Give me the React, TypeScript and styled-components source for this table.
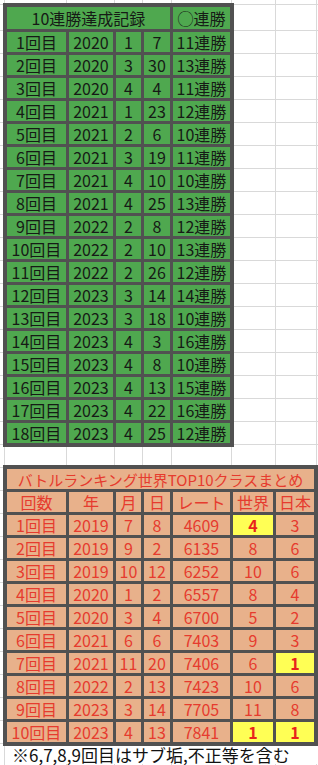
import React from "react";
import styled, { createGlobalStyle } from "styled-components";

const GlobalStyle = createGlobalStyle`
  html, body {
    margin: 0;
    padding: 0;
    background: #ffffff;
    overflow: hidden;
  }
  body {
    font-family: "Noto Sans CJK JP", "Noto Sans", sans-serif;
  }
`;

const GRID = "#d9d9d9";

// 背景のセル罫線（スプレッドシート風）
const Sheet = styled.div`
  width: 318px;
  height: 765px;
  box-sizing: border-box;
  padding: 3px 0 0 3px;
  display: flex;
  flex-direction: column;
  background-color: #ffffff;
  background-image:
    linear-gradient(
      to right,
      transparent 4px, ${GRID} 4px 5px,
      transparent 5px 66px, ${GRID} 66px 67px,
      transparent 67px 114px, ${GRID} 114px 115px,
      transparent 115px 142px, ${GRID} 142px 143px,
      transparent 143px 171px, ${GRID} 171px 172px,
      transparent 172px 231px, ${GRID} 231px 232px,
      transparent 232px 275px, ${GRID} 275px 276px,
      transparent 276px 316px, ${GRID} 316px 317px,
      transparent 317px
    ),
    linear-gradient(to bottom, transparent 4px, ${GRID} 4px 5px, transparent 5px),
    repeating-linear-gradient(to bottom, ${GRID} 0 1px, transparent 1px 23px);
  background-repeat: no-repeat;
  background-size: 100% 100%, 100% 100%, 100% 2000px;
  background-position: 0 0, 0 0, 0 30px;
`;

const Table = styled.div<{ $cols: string; $rows: string }>`
  display: grid;
  grid-template-columns: ${(p) => p.$cols};
  grid-template-rows: ${(p) => p.$rows};
  gap: 3px;
  padding: 4px;
  background: #515151;
  width: max-content;
`;

const Cell = styled.div<{ $tone: "green" | "peach" | "yellow"; $span?: number; $small?: boolean }>`
  display: flex;
  align-items: center;
  justify-content: center;
  grid-column: ${(p) => (p.$span ? `span ${p.$span}` : "auto")};
  background: ${(p) =>
    p.$tone === "green" ? "#4fa84f" : p.$tone === "peach" ? "#e8b18b" : "#ffff55"};
  color: ${(p) => (p.$tone === "green" ? "#161a16" : p.$tone === "yellow" ? "#e8231c" : "#e63b2e")};
  font-weight: ${(p) => (p.$tone === "yellow" ? 700 : 400)};
  font-size: ${(p) => (p.$small ? "15px" : "16px")};
  line-height: 1;
  white-space: nowrap;
`;

const Gap = styled.div`
  height: 18px;
  flex: none;
`;

const Footnote = styled.div`
  margin-left: 3px;
  height: 18px;
  width: 311px;
  background: #ffffff;
  color: #111111;
  font-size: 17px;
  line-height: 18px;
  padding-left: 6px;
  white-space: nowrap;
`;

const streaks: [string, string, string, string, string][] = [
  ["1回目", "2020", "1", "7", "11連勝"],
  ["2回目", "2020", "3", "30", "13連勝"],
  ["3回目", "2020", "4", "4", "11連勝"],
  ["4回目", "2021", "1", "23", "12連勝"],
  ["5回目", "2021", "2", "6", "10連勝"],
  ["6回目", "2021", "3", "19", "11連勝"],
  ["7回目", "2021", "4", "10", "10連勝"],
  ["8回目", "2021", "4", "25", "13連勝"],
  ["9回目", "2022", "2", "8", "12連勝"],
  ["10回目", "2022", "2", "10", "13連勝"],
  ["11回目", "2022", "2", "26", "12連勝"],
  ["12回目", "2023", "3", "14", "14連勝"],
  ["13回目", "2023", "3", "18", "10連勝"],
  ["14回目", "2023", "4", "3", "16連勝"],
  ["15回目", "2023", "4", "8", "10連勝"],
  ["16回目", "2023", "4", "13", "15連勝"],
  ["17回目", "2023", "4", "22", "16連勝"],
  ["18回目", "2023", "4", "25", "12連勝"],
];

const ranking: string[][] = [
  ["1回目", "2019", "7", "8", "4609", "4", "3"],
  ["2回目", "2019", "9", "2", "6135", "8", "6"],
  ["3回目", "2019", "10", "12", "6252", "10", "6"],
  ["4回目", "2020", "1", "2", "6557", "8", "4"],
  ["5回目", "2020", "3", "4", "6700", "5", "2"],
  ["6回目", "2021", "6", "6", "7403", "9", "3"],
  ["7回目", "2021", "11", "20", "7406", "6", "1"],
  ["8回目", "2022", "2", "13", "7423", "10", "6"],
  ["9回目", "2023", "3", "14", "7705", "11", "8"],
  ["10回目", "2023", "4", "13", "7841", "1", "1"],
];

// 世界・日本で1桁上位のセルは黄色
const isTop = (ri: number, ci: number) =>
  (ri === 0 && ci === 5) || (ri === 6 && ci === 6) || (ri === 9 && (ci === 5 || ci === 6));

const App: React.FC = () => {
  return (
    <>
      <GlobalStyle />
      <Sheet>
        <Table $cols="59px 44px 25px 26px 57px" $rows="22px repeat(18, 20px)">
          <Cell $tone="green" $span={4}>10連勝達成記録</Cell>
          <Cell $tone="green">◯連勝</Cell>
          {streaks.map((row) =>
            row.map((v, i) => (
              <Cell key={row[0] + i} $tone="green">
                {v}
              </Cell>
            ))
          )}
        </Table>
        <Gap />
        <Table $cols="59px 44px 25px 26px 57px 40px 38px" $rows="20px 20px repeat(10, 20px)">
          <Cell $tone="peach" $span={7} $small>
            バトルランキング世界TOP10クラスまとめ
          </Cell>
          {["回数", "年", "月", "日", "レート", "世界", "日本"].map((h) => (
            <Cell key={h} $tone="peach">
              {h}
            </Cell>
          ))}
          {ranking.map((row, ri) =>
            row.map((v, ci) => (
              <Cell key={row[0] + ci} $tone={isTop(ri, ci) ? "yellow" : "peach"}>
                {v}
              </Cell>
            ))
          )}
        </Table>
        <Footnote>※6,7,8,9回目はサブ垢,不正等を含む</Footnote>
      </Sheet>
    </>
  );
};

export default App;
